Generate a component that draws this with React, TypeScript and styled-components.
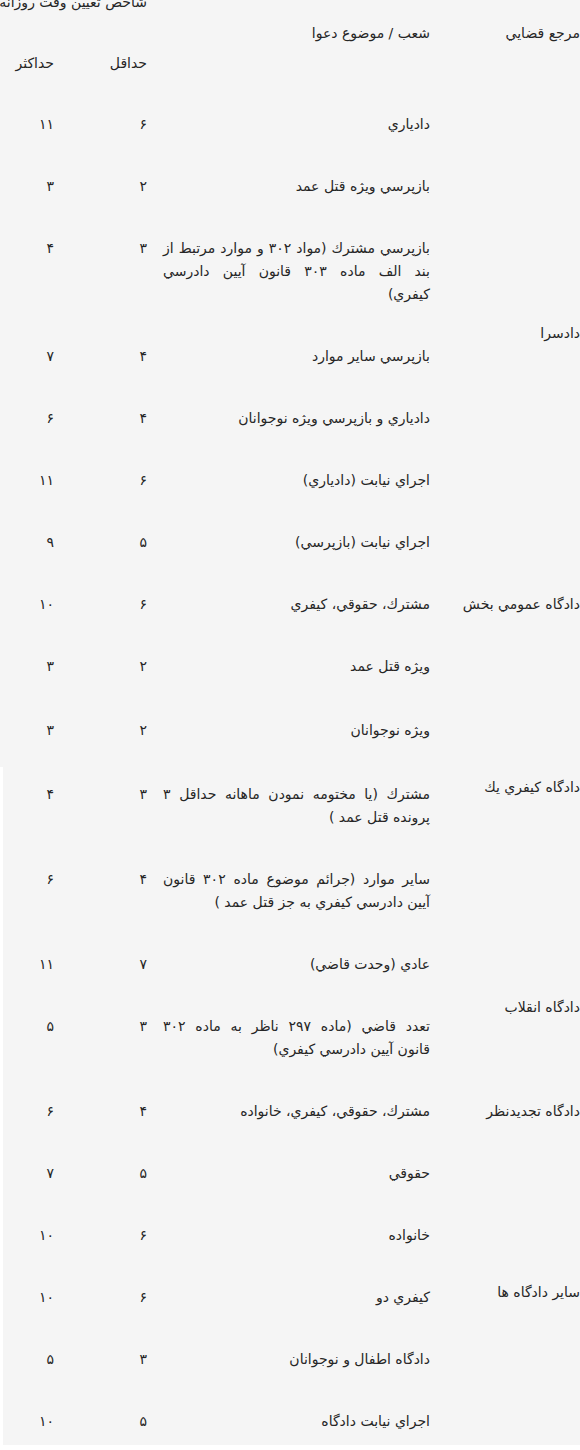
import React from 'react';
import styled, { createGlobalStyle } from 'styled-components';

const GlobalStyle = createGlobalStyle`
  html, body {
    margin: 0;
    padding: 0;
    background: #ffffff;
    overflow: hidden;
  }
  body {
    font-family: "DejaVu Sans", "Noto Sans", sans-serif;
  }
`;

const Page = styled.div`
  direction: rtl;
  margin-top: -11px;
  color: #262626;
  font-size: 14px;
  line-height: 23px;
`;

const Table = styled.table<{ $inset?: number }>`
  width: calc(100% - ${(p) => p.$inset ?? 0}px);
  margin-left: ${(p) => p.$inset ?? 0}px;
  border-collapse: collapse;
  table-layout: fixed;
  background: #f5f5f5;
`;

const Col = styled.col<{ $w: number }>`
  width: ${(p) => p.$w}px;
`;

const Cell = styled.td<{ $pt?: number; $pb?: number; $valign?: 'top' | 'middle' }>`
  padding: ${(p) => p.$pt ?? 16}px 8px ${(p) => p.$pb ?? 23}px;
  vertical-align: ${(p) => p.$valign ?? 'top'};
  text-align: right;
  font-weight: normal;
`;

const CourtCell = styled(Cell)`
  padding-right: 0;
  white-space: nowrap;
`;

const SubjectCell = styled(Cell)`
  text-align: justify;
`;

// one line of a wrapped subject; every line but the last is spread to full width
const Line = styled.span<{ $spread?: boolean }>`
  display: block;
  white-space: nowrap;
  text-align: justify;
  text-align-last: ${(p) => (p.$spread ? 'justify' : 'auto')};
`;

const HeadCell = styled(Cell).attrs({ as: 'th' })``;

const CourtHead = styled(CourtCell).attrs({ as: 'th' })``;

const TitleCell = styled(Cell).attrs({ as: 'th' })`
  white-space: nowrap;
  overflow: visible;
`;

type Item = { subject: string | string[]; min: string; max: string };
type Group = {
  court: string;
  align: 'top' | 'middle';
  courtTop?: number;
  items: Item[];
};

const upper: Group[] = [
  {
    court: 'دادسرا',
    align: 'middle',
    items: [
      { subject: 'دادياري', min: '۶', max: '۱۱' },
      { subject: 'بازپرسي ويژه قتل عمد', min: '۲', max: '۳' },
      {
        subject: [
          'بازپرسي مشترك (مواد ۳۰۲ و موارد مرتبط از',
          'بند الف ماده ۳۰۳ قانون آيين دادرسي',
          'كيفري)',
        ],
        min: '۳',
        max: '۴',
      },
      { subject: 'بازپرسي ساير موارد', min: '۴', max: '۷' },
      { subject: 'دادياري و بازپرسي ويژه نوجوانان', min: '۴', max: '۶' },
      { subject: 'اجراي نيابت (دادياري)', min: '۶', max: '۱۱' },
      { subject: 'اجراي نيابت (بازپرسي)', min: '۵', max: '۹' },
    ],
  },
  {
    court: 'دادگاه عمومي بخش',
    align: 'top',
    items: [
      { subject: 'مشترك، حقوقي، كيفري', min: '۶', max: '۱۰' },
      { subject: 'ويژه قتل عمد', min: '۲', max: '۳' },
      { subject: 'ويژه نوجوانان', min: '۲', max: '۳' },
    ],
  },
];

const lower: Group[] = [
  {
    court: 'دادگاه كيفري يك',
    align: 'top',
    courtTop: 9,
    items: [
      {
        subject: ['مشترك (يا مختومه نمودن ماهانه حداقل ۳', 'پرونده قتل عمد )'],
        min: '۳',
        max: '۴',
      },
      {
        subject: ['ساير موارد (جرائم موضوع ماده ۳۰۲ قانون', 'آيين دادرسي كيفري به جز قتل عمد )'],
        min: '۴',
        max: '۶',
      },
    ],
  },
  {
    court: 'دادگاه انقلاب',
    align: 'middle',
    items: [
      { subject: 'عادي (وحدت قاضي)', min: '۷', max: '۱۱' },
      {
        subject: ['تعدد قاضي (ماده ۲۹۷ ناظر به ماده ۳۰۲', 'قانون آيين دادرسي كيفري)'],
        min: '۳',
        max: '۵',
      },
    ],
  },
  {
    court: 'دادگاه تجديدنظر',
    align: 'middle',
    items: [{ subject: 'مشترك، حقوقي، كيفري، خانواده', min: '۴', max: '۶' }],
  },
  {
    court: 'ساير دادگاه ها',
    align: 'middle',
    items: [
      { subject: 'حقوقي', min: '۵', max: '۷' },
      { subject: 'خانواده', min: '۶', max: '۱۰' },
      { subject: 'كيفري دو', min: '۶', max: '۱۰' },
      { subject: 'دادگاه اطفال و نوجوانان', min: '۳', max: '۵' },
      { subject: 'اجراي نيابت دادگاه', min: '۵', max: '۱۰' },
    ],
  },
];

const Columns: React.FC<{ last: number }> = ({ last }) => (
  <colgroup>
    <Col $w={142} />
    <Col $w={283} />
    <Col $w={93} />
    <Col $w={last} />
  </colgroup>
);

const Subject: React.FC<{ text: string | string[] }> = ({ text }) => {
  if (typeof text === 'string') return <>{text}</>;
  return (
    <>
      {text.map((line, i) => (
        <Line key={i} $spread={i < text.length - 1}>
          {line}
        </Line>
      ))}
    </>
  );
};

// bottom padding per row, keyed by "group-index"
const GroupRows: React.FC<{ groups: Group[]; pad?: Record<string, number> }> = ({ groups, pad = {} }) => (
  <>
    {groups.map((g, gi) =>
      g.items.map((it, i) => {
        const pb = pad[`${gi}-${i}`];
        return (
          <tr key={`${gi}-${i}`}>
            {i === 0 && (
              <CourtCell rowSpan={g.items.length} $valign={g.align} $pt={g.courtTop}>
                {g.court}
              </CourtCell>
            )}
            <SubjectCell $pb={pb}>
              <Subject text={it.subject} />
            </SubjectCell>
            <Cell $pb={pb}>{it.min}</Cell>
            <Cell $pb={pb}>{it.max}</Cell>
          </tr>
        );
      })
    )}
  </>
);

const App: React.FC = () => {
  return (
    <>
      <GlobalStyle />
      <Page>
        <Table>
          <Columns last={62} />
          <thead>
            <tr>
              <CourtHead rowSpan={2} $pt={33}>
                مرجع قضايي
              </CourtHead>
              <HeadCell rowSpan={2} $pt={33}>
                شعب / موضوع دعوا
              </HeadCell>
              <TitleCell colSpan={2} $pt={2} $pb={18}>
                شاخص تعيين وقت روزانه
              </TitleCell>
            </tr>
            <tr>
              <HeadCell $pt={20} $pb={22}>
                حداقل
              </HeadCell>
              <HeadCell $pt={20} $pb={22}>
                حداكثر
              </HeadCell>
            </tr>
          </thead>
          <tbody>
            <GroupRows groups={upper} pad={{ '1-1': 25, '1-2': 25 }} />
          </tbody>
        </Table>
        <Table $inset={3}>
          <Columns last={59} />
          <tbody>
            <GroupRows groups={lower} pad={{ '3-4': 12 }} />
          </tbody>
        </Table>
      </Page>
    </>
  );
};

export default App;
